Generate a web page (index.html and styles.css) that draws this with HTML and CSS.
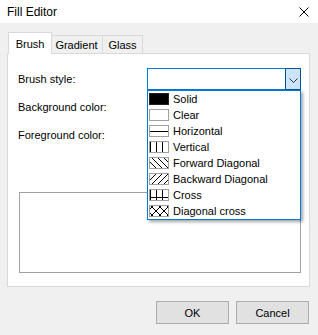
FILE: index.html
```html
<!DOCTYPE html>
<html lang="en">
<head>
  <meta charset="UTF-8">
  <title>Fill Editor</title>
  <link rel="stylesheet" href="styles.css">
</head>
<body>
  <div class="window">
    <!-- Title bar -->
    <div class="titlebar">
      <span class="title">Fill Editor</span>
      <svg class="close" width="10" height="10" viewBox="0 0 10 10">
        <path d="M0.5 0.5 L9.5 9.5 M9.5 0.5 L0.5 9.5" stroke="#000" stroke-width="1"/>
      </svg>
    </div>

    <div class="content">
      <!-- Tabs -->
      <div class="tabs">
        <div class="tab active">Brush</div>
        <div class="tab gradient">Gradient</div>
        <div class="tab glass">Glass</div>
      </div>

      <div class="panel">
        <div class="form">
          <div class="row">
            <span class="label">Brush style:</span>
            <div class="combo">
              <div class="comboText"></div>
              <div class="dropBtn">
                <svg width="9" height="5" viewBox="0 0 9 5">
                  <path d="M0.5 0.5 L4.5 4.5 L8.5 0.5" fill="none" stroke="#333" stroke-width="1"/>
                </svg>
              </div>

              <ul class="dropdown">
                <li>
                  <svg class="swatch" width="20" height="12" viewBox="0 0 20 12" shape-rendering="crispEdges">
                    <rect x="0.5" y="0.5" width="19" height="11" fill="#000" stroke="#222"/>
                  </svg>
                  Solid
                </li>
                <li>
                  <svg class="swatch" width="20" height="12" viewBox="0 0 20 12" shape-rendering="crispEdges">
                    <rect x="0.5" y="0.5" width="19" height="11" fill="#fff" stroke="#a0a0a0"/>
                  </svg>
                  Clear
                </li>
                <li>
                  <svg class="swatch" width="20" height="12" viewBox="0 0 20 12" shape-rendering="crispEdges">
                    <rect x="0.5" y="0.5" width="19" height="11" fill="#fff" stroke="#a0a0a0"/>
                    <path d="M1 6.5 H19" stroke="#000"/>
                  </svg>
                  Horizontal
                </li>
                <li>
                  <svg class="swatch" width="20" height="12" viewBox="0 0 20 12" shape-rendering="crispEdges">
                    <rect x="0.5" y="0.5" width="19" height="11" fill="#fff" stroke="#a0a0a0"/>
                    <path d="M1.5 1 V11 M7.5 1 V11 M13.5 1 V11" stroke="#000"/>
                  </svg>
                  Vertical
                </li>
                <li>
                  <svg class="swatch" width="20" height="12" viewBox="0 0 20 12">
                    <defs><clipPath id="c1"><rect x="1" y="1" width="18" height="10"/></clipPath></defs>
                    <rect x="0.5" y="0.5" width="19" height="11" fill="#fff" stroke="#a0a0a0"/>
                    <path d="M-10 0 L2 12 M-4 0 L8 12 M2 0 L14 12 M8 0 L20 12 M14 0 L26 12" stroke="#000" stroke-width="1" clip-path="url(#c1)"/>
                  </svg>
                  Forward Diagonal
                </li>
                <li>
                  <svg class="swatch" width="20" height="12" viewBox="0 0 20 12">
                    <defs><clipPath id="c2"><rect x="1" y="1" width="18" height="10"/></clipPath></defs>
                    <rect x="0.5" y="0.5" width="19" height="11" fill="#fff" stroke="#a0a0a0"/>
                    <path d="M-4 12 L8 0 M2 12 L14 0 M8 12 L20 0 M14 12 L26 0 M-10 12 L2 0" stroke="#000" stroke-width="1" clip-path="url(#c2)"/>
                  </svg>
                  Backward Diagonal
                </li>
                <li>
                  <svg class="swatch" width="20" height="12" viewBox="0 0 20 12" shape-rendering="crispEdges">
                    <rect x="0.5" y="0.5" width="19" height="11" fill="#fff" stroke="#a0a0a0"/>
                    <path d="M1.5 1 V11 M7.5 1 V11 M13.5 1 V11 M1 8.5 H19" stroke="#000"/>
                  </svg>
                  Cross
                </li>
                <li>
                  <svg class="swatch" width="20" height="12" viewBox="0 0 20 12">
                    <defs><clipPath id="c3"><rect x="1" y="1" width="18" height="10"/></clipPath></defs>
                    <rect x="0.5" y="0.5" width="19" height="11" fill="#fff" stroke="#a0a0a0"/>
                    <g clip-path="url(#c3)" stroke="#000" stroke-width="1">
                      <path d="M-7 0 L5 12 M1 0 L13 12 M9 0 L21 12 M17 0 L29 12"/>
                      <path d="M-7 12 L5 0 M1 12 L13 0 M9 12 L21 0 M17 12 L29 0"/>
                    </g>
                  </svg>
                  Diagonal cross
                </li>
              </ul>
            </div>
          </div>
          <div class="row">
            <span class="label">Background color:</span>
          </div>
          <div class="row">
            <span class="label">Foreground color:</span>
          </div>
        </div>

        <div class="preview"></div>
      </div>

      <!-- Dialog buttons -->
      <div class="buttons">
        <button class="btn">OK</button>
        <button class="btn">Cancel</button>
      </div>
    </div>
  </div>
</body>
</html>
```

FILE: styles.css
```css
/* Base */
body {
  margin: 0;
  padding: 0;
  background: #f0f0f0;
  font-family: "Liberation Sans", Arial, sans-serif;
  font-size: 11px;
  color: #000;
}
.window {
  width: 318px;
  height: 335px;
  background: #f0f0f0;
}
/* Title bar */
.titlebar {
  height: 23px;
  background: #fff;
  display: flex;
  align-items: center;
  justify-content: space-between;
  padding: 0 9px 0 7px;
  box-sizing: border-box;
}
.title {
  font-size: 12px;
}
.close {
  display: block;
}
/* Content */
.content {
  padding: 9px 8px 0 7px;
}
.tabs {
  display: flex;
  align-items: flex-end;
  height: 22px;
  padding-left: 1px;
}
.tab {
  box-sizing: border-box;
  height: 19px;
  border: 1px solid #d9d9d9;
  background: #f0f0f0;
  display: flex;
  align-items: center;
  justify-content: center;
  padding-top: 1px;
}
.tab.active {
  width: 44px;
  height: 22px;
  background: #fff;
  border-bottom: none;
  position: relative;
  z-index: 1;
  padding-top: 0;
}
.tab.gradient {
  width: 52px;
  margin-left: -1px;
  border-left: none;
}
.tab.glass {
  width: 41px;
  margin-left: -1px;
}
/* Tab page */
.panel {
  box-sizing: border-box;
  height: 234px;
  margin-top: -1px;
  background: #fff;
  border: 1px solid #d9d9d9;
  padding: 14px 0 0 10px;
}
.form {
  display: flex;
  flex-direction: column;
  gap: 6px;
  height: 78px;
}
.row {
  flex: none;
  height: 22px;
  display: flex;
  align-items: center;
}
.label {
  width: 129px;
}
.combo {
  position: relative;
  z-index: 5;
  box-sizing: border-box;
  width: 154px;
  height: 22px;
  border: 1px solid #0078d7;
  background: #fff;
  display: flex;
}
.comboText {
  flex: 1;
}
.dropBtn {
  width: 16px;
  box-sizing: border-box;
  background: #cce4f7;
  border: 1px solid #005499;
  margin: -1px -1px -1px 0;
  display: flex;
  align-items: center;
  justify-content: center;
  padding-top: 2px;
}
.dropBtn svg {
  display: block;
}
/* Dropdown list over the form */
.dropdown {
  position: absolute;
  top: 21px;
  left: -1px;
  width: 154px;
  box-sizing: border-box;
  margin: 0;
  padding: 0;
  list-style: none;
  background: #fff;
  border: 1px solid #0078d7;
  box-shadow: 2px 2px 3px rgba(0, 0, 0, 0.35);
}
.dropdown li {
  height: 16px;
  display: flex;
  align-items: center;
  gap: 4px;
  padding-left: 1px;
}
.swatch {
  display: block;
}
.preview {
  box-sizing: border-box;
  width: 282px;
  height: 81px;
  margin: 46px 0 0 1px;
  border: 1px solid #a0a0a0;
  background: #fff;
}
/* Buttons */
.buttons {
  display: flex;
  justify-content: flex-end;
  gap: 7px;
  margin-top: 14px;
  padding-right: 1px;
}
.btn {
  box-sizing: border-box;
  width: 73px;
  height: 23px;
  margin: 0;
  padding: 0;
  background: #e1e1e1;
  border: 1px solid #adadad;
  font-family: "Liberation Sans", Arial, sans-serif;
  font-size: 11px;
  color: #000;
}
```
